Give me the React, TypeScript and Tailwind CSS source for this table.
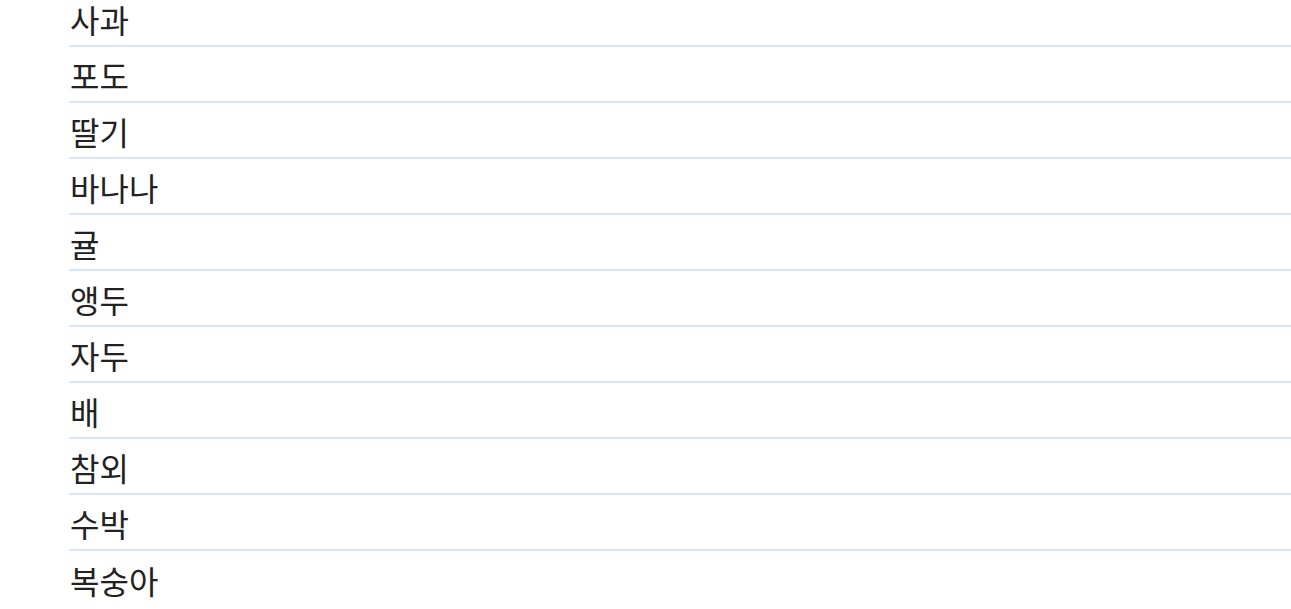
const fruits = ["사과", "포도", "딸기", "바나나", "귤", "앵두", "자두", "배", "참외", "수박", "복숭아"];

export default function App() {
  return (
    <div className="w-[1291px] h-[609px] overflow-hidden bg-white">
      <ul className="-mt-[9px] pl-[69px]" style={{ fontFamily: '"Noto Sans CJK KR", "Noto Sans", sans-serif' }}>
        {fruits.map((f) => (
          <li
            key={f}
            className="h-[56px] flex items-center border-b-2 border-[#d5e3fb] last:border-b-0 text-[32px] leading-none text-[#222222] pl-[1px] pt-[2px]"
          >
            {f}
          </li>
        ))}
      </ul>
    </div>
  );
}
